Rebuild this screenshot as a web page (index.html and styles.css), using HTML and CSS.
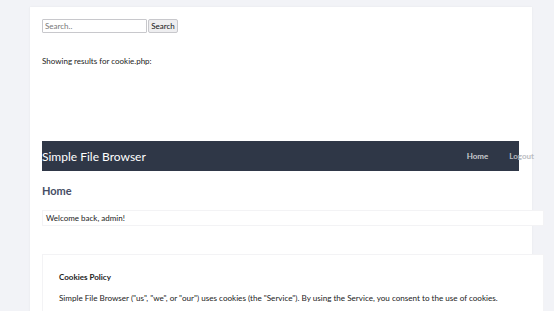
FILE: index.html
```html
<!DOCTYPE html>
<html lang="en">
<head>
  <meta charset="UTF-8">
  <meta name="viewport" content="width=device-width, initial-scale=1.0">
  <title>Simple File Browser</title>
  <link rel="stylesheet" href="styles.css">
</head>
<body>
  <div class="container">
    <!-- search -->
    <form class="search">
      <input type="text" class="search-input" placeholder="Search..">
      <button type="button" class="search-btn">Search</button>
    </form>

    <p class="results">Showing results for cookie.php:</p>

    <!-- navigation -->
    <nav class="navbar">
      <span class="brand">Simple File Browser</span>
      <ul class="nav-links">
        <li><a href="#" class="active">Home</a></li>
        <li><a href="#">Logout</a></li>
      </ul>
    </nav>

    <h2 class="page-title">Home</h2>
    <div class="welcome">Welcome back, admin!</div>

    <!-- cookie notice -->
    <div class="cookies">
      <h4>Cookies Policy</h4>
      <p>Simple File Browser ("us", "we", or "our") uses cookies (the "Service"). By using the Service, you consent to the use of cookies.</p>
    </div>
  </div>
</body>
</html>
```

FILE: styles.css
```css
/* base */
body {
  margin: 0;
  padding-top: 7px;
  background-color: #f2f3f7;
  font-family: "Lato", "Noto Sans", sans-serif;
  font-size: 8px;
  color: #222;
}
/* white page */
.container {
  width: 478px;
  margin-left: 30px;
  padding: 12px 12px 0;
  background-color: #fff;
  box-shadow: 0 0 2px rgba(0, 0, 0, 0.06);
  min-height: 320px;
}
/* search form */
.search {
  display: flex;
  align-items: center;
  gap: 1px;
  margin: 0;
}
.search-input {
  box-sizing: border-box;
  width: 105px;
  height: 14px;
  padding: 0 2px;
  border: 1px solid #c8c8cc;
  border-radius: 1px;
  font-family: inherit;
  font-size: 8px;
}
.search-input::placeholder {
  color: #777;
}
.search-btn {
  box-sizing: border-box;
  height: 14px;
  width: 30px;
  padding: 0;
  border: 1px solid #c8c8cc;
  border-radius: 2px;
  background-color: #eeeef0;
  font-family: inherit;
  font-size: 8px;
  color: #111;
}
.results {
  margin: 22px 0 0;
  line-height: 12px;
}
/* navbar */
.navbar {
  display: flex;
  align-items: center;
  justify-content: space-between;
  width: 477px;
  height: 30px;
  margin-top: 74px;
  background-color: #2f3747;
}
.brand {
  font-size: 12px;
  color: #fff;
}
.nav-links {
  display: flex;
  gap: 21px;
  margin: 0 -15px 0 0;
  padding: 0;
  list-style: none;
}
.nav-links a {
  font-size: 8px;
  font-weight: bold;
  text-decoration: none;
  color: #bbbdc2;
}
.nav-links a.active {
  color: #c8cace;
}
/* content */
.page-title {
  margin: 13px 0 12px;
  font-size: 11px;
  line-height: 14px;
  color: #474e66;
}
.welcome {
  box-sizing: border-box;
  width: 502px;
  height: 16px;
  padding: 0 3px;
  border: 1px solid #f3f3f5;
  background-color: #fff;
  line-height: 14px;
}
.cookies {
  box-sizing: border-box;
  width: 502px;
  margin-top: 28px;
  padding: 17px 16px 16px;
  background-color: #fff;
  border: 1px solid #f3f3f5;
}
.cookies h4 {
  margin: 0 0 11px;
  font-size: 8px;
  line-height: 10px;
}
.cookies p {
  margin: 0;
  font-size: 8.1px;
  line-height: 10px;
}
```
